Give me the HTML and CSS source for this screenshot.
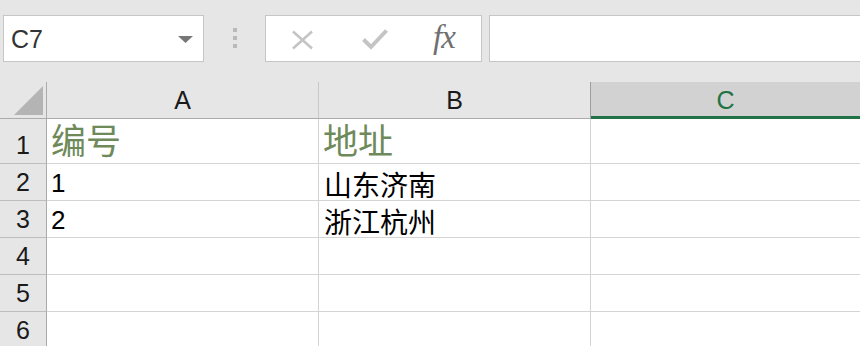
FILE: index.html
```html
<!DOCTYPE html>
<html lang="zh">
<head>
<meta charset="utf-8">
<link rel="stylesheet" href="styles.css">
</head>
<body>
<div class="app">
  <div class="toolbar">
    <div class="namebox">
      <span class="ref">C7</span>
      <svg class="caret" width="15" height="7" viewBox="0 0 15 7"><polygon points="0,0 15,0 7.5,7" fill="#777"/></svg>
    </div>
    <div class="sep"><span></span><span></span><span></span></div>
    <div class="fxbtns">
      <svg class="ico" width="23" height="20" viewBox="0 0 23 20"><path d="M2 1.5 L21 18.5 M21 1.5 L2 18.5" stroke="#c4c4c4" stroke-width="2.6" fill="none"/></svg>
      <svg class="ico" width="26" height="22" viewBox="0 0 26 22"><path d="M1.5 11.5 L9 19 L24.5 2.5" stroke="#c4c4c4" stroke-width="4" fill="none"/></svg>
      <span class="fx">fx</span>
    </div>
    <div class="formula"></div>
  </div>
  <div class="sheet">
    <div class="hd corner"><svg width="29" height="29" viewBox="0 0 29 29"><polygon points="29,0 29,29 0,29" fill="#b4b4b4"/></svg></div>
    <div class="hd col">A</div>
    <div class="hd col">B</div>
    <div class="hd col sel">C</div>

    <div class="rh r1">1</div>
    <div class="cell r1 title">编号</div>
    <div class="cell r1 title">地址</div>
    <div class="cell r1"></div>

    <div class="rh">2</div>
    <div class="cell num">1</div>
    <div class="cell">山东济南</div>
    <div class="cell"></div>

    <div class="rh">3</div>
    <div class="cell num">2</div>
    <div class="cell">浙江杭州</div>
    <div class="cell"></div>

    <div class="rh">4</div>
    <div class="cell"></div>
    <div class="cell"></div>
    <div class="cell"></div>

    <div class="rh">5</div>
    <div class="cell"></div>
    <div class="cell"></div>
    <div class="cell"></div>

    <div class="rh">6</div>
    <div class="cell"></div>
    <div class="cell"></div>
    <div class="cell"></div>
  </div>
</div>
</body>
</html>
```

FILE: styles.css
```css
* { box-sizing: border-box; }
html, body { margin: 0; padding: 0; }
body {
  width: 860px;
  height: 346px;
  overflow: hidden;
  background: #e6e6e6;
  font-family: "Liberation Sans", "Noto Sans CJK SC", sans-serif;
}
.app { width: 860px; }

.toolbar {
  height: 82px;
  padding-top: 15px;
  display: flex;
  align-items: flex-start;
}
.namebox {
  margin-left: 3px;
  width: 201px;
  height: 47px;
  background: #fff;
  border: 1px solid #c6c6c6;
  display: flex;
  align-items: center;
  justify-content: space-between;
  padding: 0 10px 0 7px;
}
.ref {
  font-size: 25px;
  color: #333;
  line-height: 1;
  padding-top: 2px;
}
.caret { margin-top: 1px; }
.sep {
  width: 61px;
  height: 47px;
  display: flex;
  flex-direction: column;
  align-items: center;
  padding-top: 13px;
  gap: 4px;
  padding-left: 1px;
}
.sep span {
  width: 4px;
  height: 4px;
  background: #b9b9b9;
}
.fxbtns {
  width: 217px;
  height: 47px;
  background: #fff;
  border: 1px solid #c6c6c6;
  display: flex;
  align-items: center;
  padding-left: 25px;
}
.fxbtns .ico:nth-child(1) { margin-right: 48px; margin-top: 2px; }
.fxbtns .ico:nth-child(2) { margin-right: 45px; margin-top: 1px; }
.fx {
  font-family: "Liberation Serif", serif;
  font-style: italic;
  font-size: 33px;
  color: #707070;
  line-height: 1;
  margin-top: -2px;
  letter-spacing: -1px;
}
.formula {
  flex: 1;
  margin-left: 7px;
  height: 47px;
  background: #fff;
  border: 1px solid #c6c6c6;
  border-right: none;
}

.sheet {
  display: grid;
  grid-template-columns: 47px 272px 272px 1fr;
  grid-template-rows: 37px 45px repeat(5, 37px);
  background: #fff;
}
.hd {
  background: #e6e6e6;
  border-bottom: 1px solid #ababab;
  border-right: 1px solid #c8c8c8;
}
.corner {
  border-right: 1px solid #ababab;
  display: flex;
  align-items: flex-end;
  justify-content: flex-end;
  padding: 0 3px 3px 0;
}
.col {
  display: flex;
  align-items: flex-end;
  justify-content: center;
  font-size: 25px;
  line-height: 1;
  padding-bottom: 5px;
  color: #1a1a1a;
}
.col:nth-child(3) { border-right: 1px solid #9e9e9e; }
.col.sel {
  background: #d2d2d2;
  border-right: none;
  border-bottom: 3px solid #217346;
  color: #217346;
  padding-bottom: 3px;
}
.rh {
  background: #e6e6e6;
  border-right: 1px solid #ababab;
  border-bottom: 1px solid #bdbdbd;
  display: flex;
  align-items: flex-end;
  justify-content: center;
  font-size: 25px;
  line-height: 1;
  padding-bottom: 5px;
  color: #1a1a1a;
}
.cell {
  border-right: 1px solid #d4d4d4;
  border-bottom: 1px solid #d4d4d4;
  display: flex;
  align-items: flex-end;
  padding: 0 0 2px 5px;
  font-family: "Noto Sans CJK SC", sans-serif;
  font-size: 28px;
  line-height: 1;
  color: #000;
  white-space: nowrap;
}
.cell:nth-child(4n) { border-right: none; }
.cell.num {
  font-family: "Liberation Sans", sans-serif;
  font-size: 26px;
  padding-bottom: 4px;
  padding-left: 4px;
}
.cell.title {
  font-size: 35px;
  color: #6e8a5a;
  padding-bottom: 7px;
  padding-left: 4px;
}
```
